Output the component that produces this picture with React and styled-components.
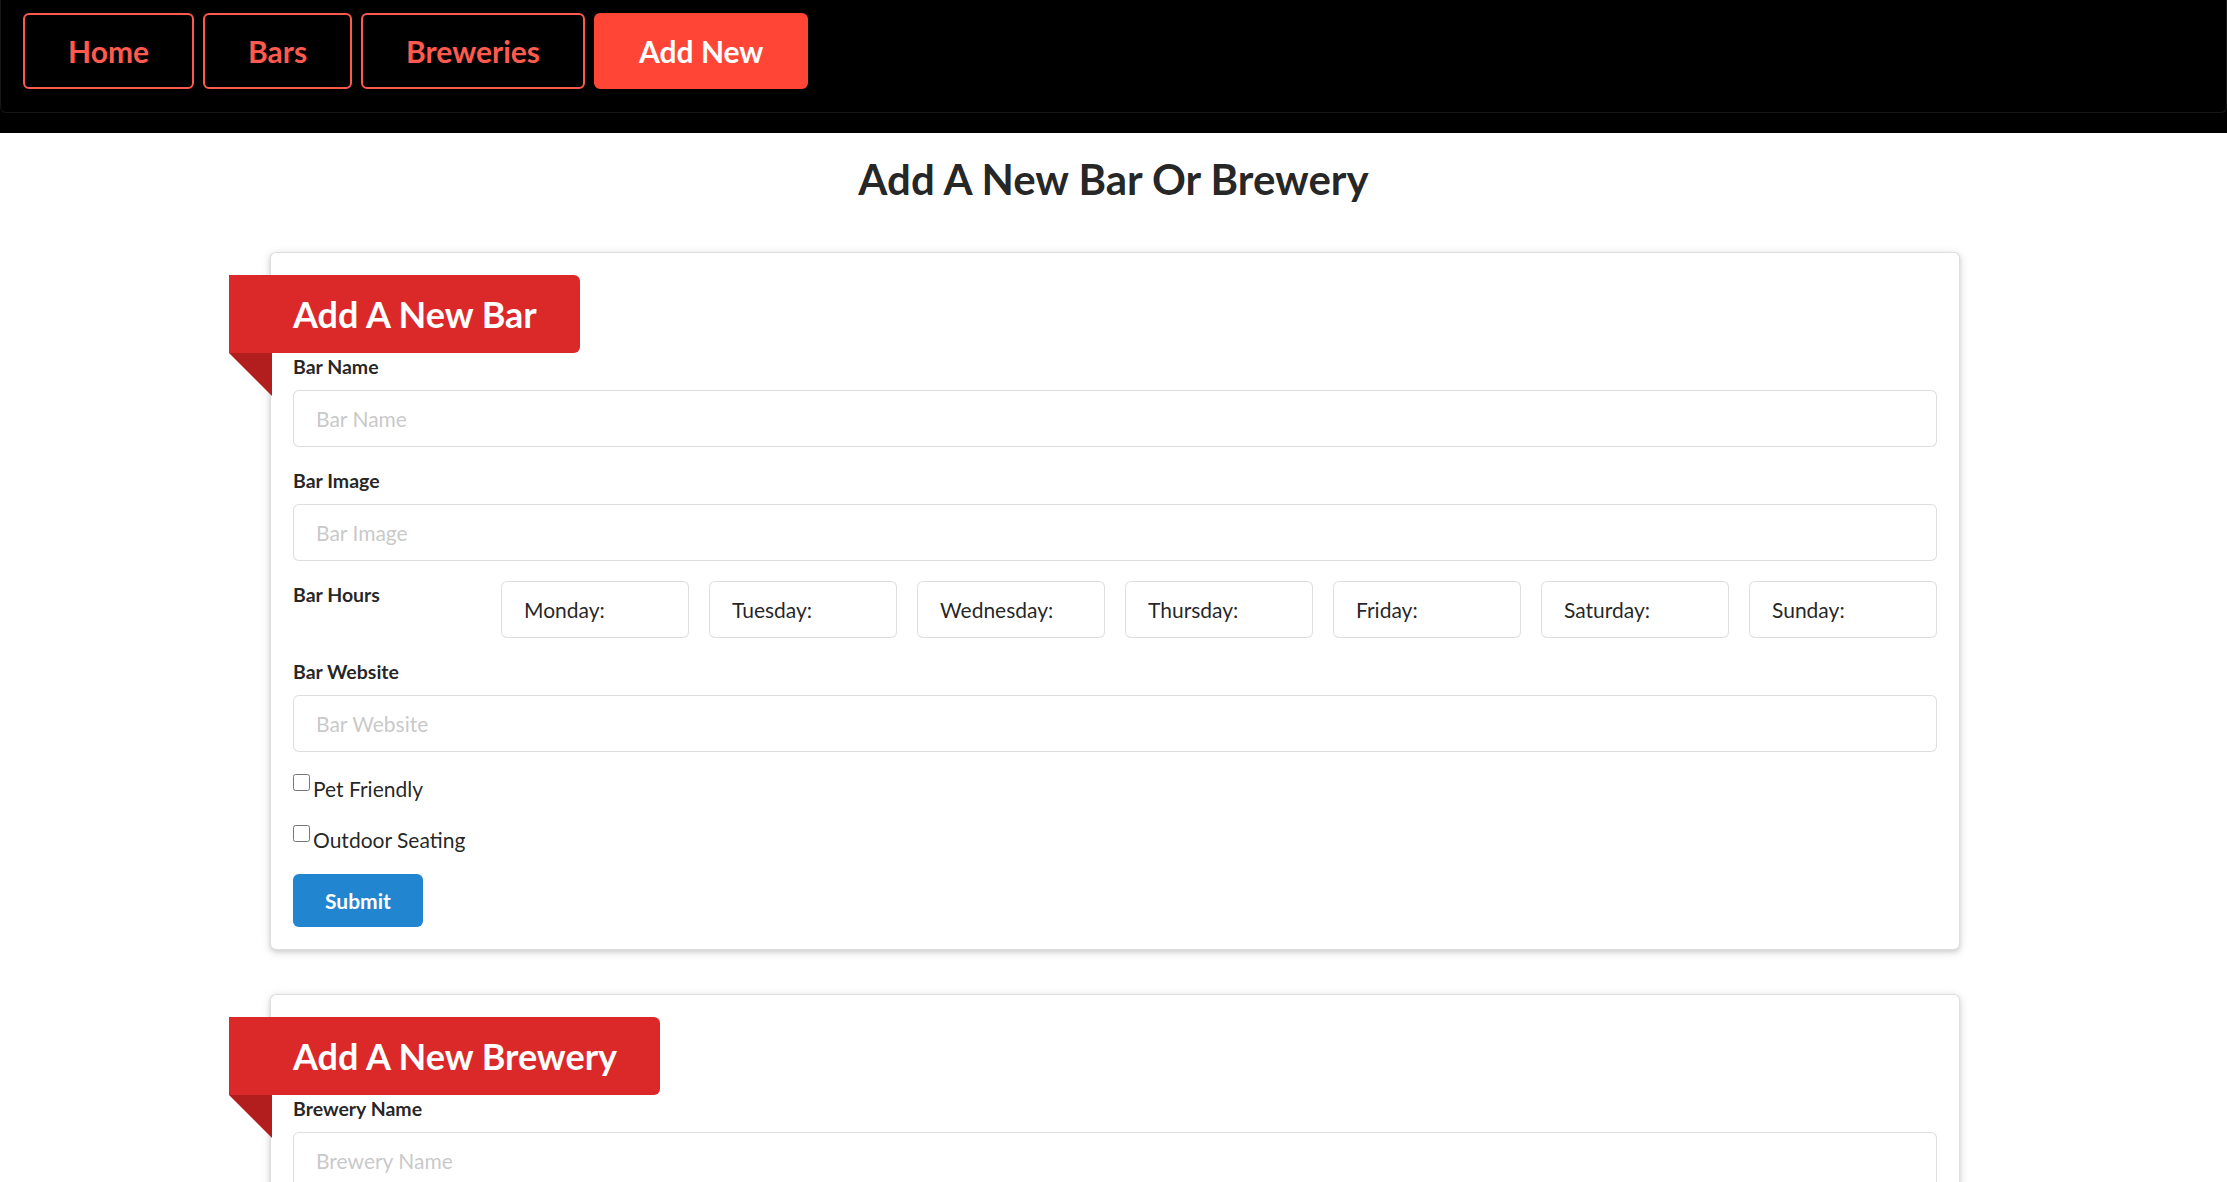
import React from "react";
import styled, { createGlobalStyle } from "styled-components";

const GlobalStyle = createGlobalStyle`
  * {
    box-sizing: border-box;
  }
  html, body {
    margin: 0;
    padding: 0;
    background: #fff;
  }
  body {
    font-family: Lato, "Helvetica Neue", Arial, sans-serif;
    font-size: 21px;
    line-height: 1.4285em;
    color: rgba(0, 0, 0, 0.87);
  }
`;

const Header = styled.header`
  background: #000;
  padding-bottom: 20px;
`;

const Menu = styled.nav`
  display: flex;
  align-items: flex-start;
  gap: 9px;
  height: 113px;
  padding: 13px 22px;
  border: 1px solid #161616;
  border-top: none;
  border-radius: 0 0 6px 6px;
`;

const NavButton = styled.a`
  display: block;
  height: 76px;
  padding: 0 43px;
  border: 2px solid #ff5a4e;
  border-radius: 6px;
  background: ${(p) => (p.$active ? "#ff4536" : "transparent")};
  border-color: ${(p) => (p.$active ? "#ff4536" : "#ff5a4e")};
  color: ${(p) => (p.$active ? "#fff" : "#ff5a4e")};
  font-size: 30px;
  font-weight: 700;
  line-height: 72px;
  text-decoration: none;
  cursor: pointer;
`;

const Title = styled.h1`
  margin: 19px 0 46px;
  text-align: center;
  font-size: 42px;
  line-height: 1.2857em;
  font-weight: 700;
  color: rgba(0, 0, 0, 0.87);
`;

const Main = styled.main`
  padding-left: 3px;
`;

const Segment = styled.form`
  width: 1690px;
  margin: 0 auto 44px;
  padding: 22px;
  background: #fff;
  border: 1px solid rgba(34, 36, 38, 0.15);
  border-radius: 6px;
  box-shadow: 0 2px 4px 0 rgba(34, 36, 38, 0.12),
    0 2px 10px 0 rgba(34, 36, 38, 0.15);
`;

const Ribbon = styled.div`
  position: relative;
  width: max-content;
  margin-left: -64px;
  padding: 21px 43px 21px 64px;
  background: #db2828;
  color: #fff;
  font-size: 36px;
  font-weight: 700;
  line-height: 1;
  border-radius: 0 6px 6px 0;

  &::after {
    content: "";
    position: absolute;
    top: 100%;
    left: 0;
    width: 0;
    height: 0;
    border-style: solid;
    border-width: 0 43px 43px 0;
    border-color: transparent #b21e1e transparent transparent;
  }
`;

const Field = styled.div`
  margin-bottom: 20px;
`;

const Label = styled.label`
  display: block;
  margin-bottom: 9px;
  font-size: 19.5px;
  line-height: 28px;
  font-weight: 700;
  color: rgba(0, 0, 0, 0.87);
`;

const Input = styled.input`
  display: block;
  width: 100%;
  height: 57px;
  margin: 0;
  padding: 0 22px;
  border: 1px solid rgba(34, 36, 38, 0.15);
  border-radius: 6px;
  background: #fff;
  font-family: inherit;
  font-size: 21px;
  color: rgba(0, 0, 0, 0.87);
  outline: none;

  &::placeholder {
    color: rgba(191, 191, 191, 0.87);
  }
`;

const HoursGrid = styled.div`
  display: grid;
  grid-template-columns: repeat(8, 1fr);
  gap: 20px;
  margin-bottom: 20px;
`;

const CheckRow = styled.label`
  display: flex;
  align-items: flex-start;
  height: 34px;
  margin-bottom: 17px;
  font-size: 21px;
  line-height: 34px;
  color: rgba(0, 0, 0, 0.87);
`;

const Check = styled.input`
  width: 17px;
  height: 17px;
  margin: 2px 3px 0 0;
`;

const Submit = styled.button`
  display: block;
  height: 53px;
  margin-top: 6px;
  padding: 0 32px;
  border: none;
  border-radius: 6px;
  background: #2185d0;
  color: #fff;
  font-family: inherit;
  font-size: 21px;
  font-weight: 700;
  cursor: pointer;
`;

const days = [
  "Monday",
  "Tuesday",
  "Wednesday",
  "Thursday",
  "Friday",
  "Saturday",
  "Sunday",
];

function AddForm({ kind }) {
  return (
    <Segment onSubmit={(e) => e.preventDefault()}>
      <Ribbon>Add A New {kind}</Ribbon>
      <Field>
        <Label>{kind} Name</Label>
        <Input placeholder={`${kind} Name`} />
      </Field>
      <Field>
        <Label>{kind} Image</Label>
        <Input placeholder={`${kind} Image`} />
      </Field>
      <HoursGrid>
        <Label>{kind} Hours</Label>
        {days.map((d) => (
          <Input key={d} defaultValue={`${d}:`} />
        ))}
      </HoursGrid>
      <Field>
        <Label>{kind} Website</Label>
        <Input placeholder={`${kind} Website`} />
      </Field>
      <CheckRow>
        <Check type="checkbox" />
        Pet Friendly
      </CheckRow>
      <CheckRow>
        <Check type="checkbox" />
        Outdoor Seating
      </CheckRow>
      <Submit type="submit">Submit</Submit>
    </Segment>
  );
}

export default function App() {
  return (
    <>
      <GlobalStyle />
      <Header>
        <Menu>
          <NavButton>Home</NavButton>
          <NavButton>Bars</NavButton>
          <NavButton>Breweries</NavButton>
          <NavButton $active>Add New</NavButton>
        </Menu>
      </Header>
      <Title>Add A New Bar Or Brewery</Title>
      <Main>
        <AddForm kind="Bar" />
        <AddForm kind="Brewery" />
      </Main>
    </>
  );
}
